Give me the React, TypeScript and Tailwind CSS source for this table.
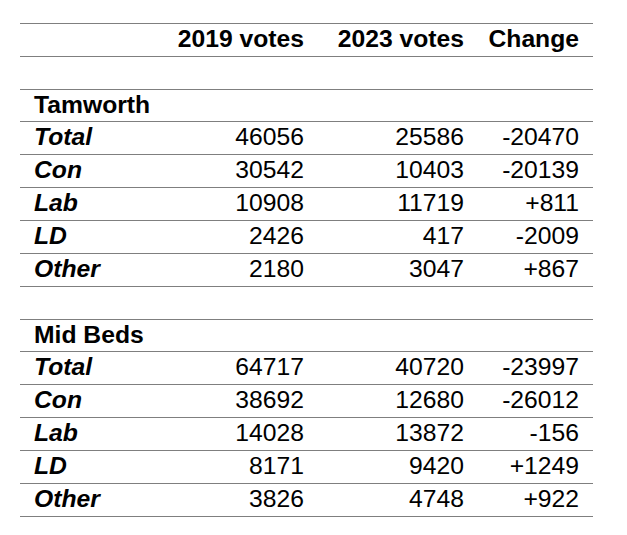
import React from "react";

type Row =
  | { kind: "header" }
  | { kind: "blank" }
  | { kind: "section"; name: string }
  | { kind: "data"; name: string; a: string; b: string; c: string };

const rows: Row[] = [
  { kind: "header" },
  { kind: "blank" },
  { kind: "section", name: "Tamworth" },
  { kind: "data", name: "Total", a: "46056", b: "25586", c: "-20470" },
  { kind: "data", name: "Con", a: "30542", b: "10403", c: "-20139" },
  { kind: "data", name: "Lab", a: "10908", b: "11719", c: "+811" },
  { kind: "data", name: "LD", a: "2426", b: "417", c: "-2009" },
  { kind: "data", name: "Other", a: "2180", b: "3047", c: "+867" },
  { kind: "blank" },
  { kind: "section", name: "Mid Beds" },
  { kind: "data", name: "Total", a: "64717", b: "40720", c: "-23997" },
  { kind: "data", name: "Con", a: "38692", b: "12680", c: "-26012" },
  { kind: "data", name: "Lab", a: "14028", b: "13872", c: "-156" },
  { kind: "data", name: "LD", a: "8171", b: "9420", c: "+1249" },
  { kind: "data", name: "Other", a: "3826", b: "4748", c: "+922" },
];

// heights including bottom border
const heights = [33, 33, 32, 33, 33, 33, 33, 33, 33, 32, 33, 33, 33, 33, 33];

export default function App() {
  return (
    <div
      className="w-[627px] h-[535px] bg-white pt-[23px] pl-[20px] text-black"
      style={{ fontFamily: '"Liberation Sans", Arial, sans-serif' }}
    >
      <div className="w-[573px] border-t border-[#7f7f7f]">
        {rows.map((r, i) => {
          const h = heights[i];
          const rowCls =
            "grid grid-cols-[144px_154px_160px_115px] border-b border-[#7f7f7f] text-[24.7px] leading-[24px] pt-[3px]";
          const style = { height: h };
          if (r.kind === "header") {
            return (
              <div key={i} className={rowCls + " font-bold"} style={style}>
                <div />
                <div className="text-right pr-[14px] whitespace-nowrap">2019 votes</div>
                <div className="text-right pr-[14px] whitespace-nowrap">2023 votes</div>
                <div className="text-right pr-[14px]">Change</div>
              </div>
            );
          }
          if (r.kind === "blank") {
            return <div key={i} className={rowCls} style={style} />;
          }
          if (r.kind === "section") {
            return (
              <div key={i} className={rowCls} style={style}>
                <div className="pl-[14px] font-bold whitespace-nowrap">{r.name}</div>
                <div />
                <div />
                <div />
              </div>
            );
          }
          return (
            <div key={i} className={rowCls} style={style}>
              <div className="pl-[14px] font-bold italic">{r.name}</div>
              <div className="text-right pr-[14px]">{r.a}</div>
              <div className="text-right pr-[14px]">{r.b}</div>
              <div className="text-right pr-[14px]">{r.c}</div>
            </div>
          );
        })}
      </div>
    </div>
  );
}
